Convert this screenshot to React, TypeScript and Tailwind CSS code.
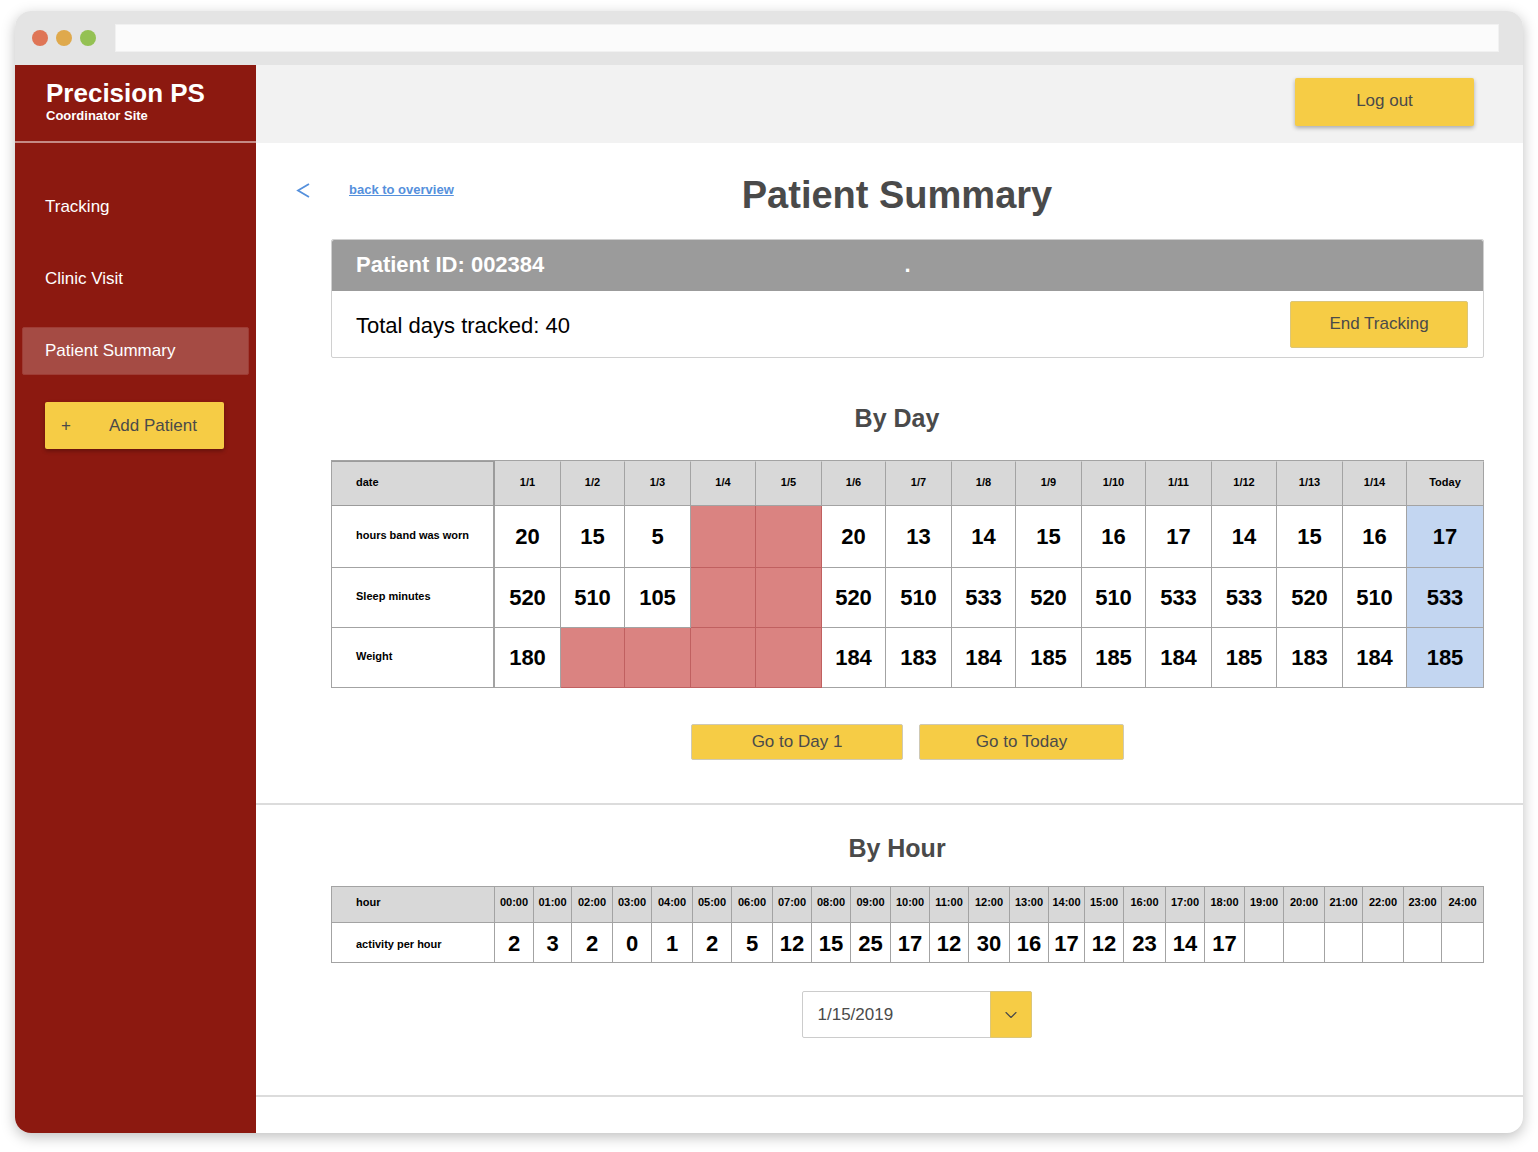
import { ChevronDown } from "lucide-react";

type CellValue = string | null;

const dayColumns = [
  { label: "1/1", width: "w-[66px]" },
  { label: "1/2", width: "w-[64px]" },
  { label: "1/3", width: "w-[66px]" },
  { label: "1/4", width: "w-[65px]" },
  { label: "1/5", width: "w-[66px]" },
  { label: "1/6", width: "w-[64px]" },
  { label: "1/7", width: "w-[66px]" },
  { label: "1/8", width: "w-[64px]" },
  { label: "1/9", width: "w-[66px]" },
  { label: "1/10", width: "w-[64px]" },
  { label: "1/11", width: "w-[66px]" },
  { label: "1/12", width: "w-[65px]" },
  { label: "1/13", width: "w-[66px]" },
  { label: "1/14", width: "w-[64px]" },
  { label: "Today", width: "w-[77px]" },
];

const dayRows: { label: string; height: string; values: CellValue[] }[] = [
  {
    label: "hours band was worn",
    height: "h-[62px]",
    values: ["20", "15", "5", null, null, "20", "13", "14", "15", "16", "17", "14", "15", "16", "17"],
  },
  {
    label: "Sleep minutes",
    height: "h-[60px]",
    values: ["520", "510", "105", null, null, "520", "510", "533", "520", "510", "533", "533", "520", "510", "533"],
  },
  {
    label: "Weight",
    height: "h-[60px]",
    values: ["180", null, null, null, null, "184", "183", "184", "185", "185", "184", "185", "183", "184", "185"],
  },
];

const activity = [
  "2", "3", "2", "0", "1", "2", "5", "12", "15", "25", "17", "12", "30", "16", "17", "12", "23", "14", "17",
  "", "", "", "", "", "",
];

const hourWidths = [
  "w-[39px]", "w-[38px]", "w-[41px]", "w-[39px]", "w-[41px]", "w-[39px]", "w-[41px]", "w-[39px]", "w-[39px]",
  "w-[40px]", "w-[39px]", "w-[39px]", "w-[41px]", "w-[39px]", "w-[36px]", "w-[39px]", "w-[42px]", "w-[39px]",
  "w-[40px]", "w-[39px]", "w-[41px]", "w-[38px]", "w-[41px]", "w-[38px]", "w-[42px]",
];

const navItems = ["Tracking", "Clinic Visit", "Patient Summary"];

function BrowserBar() {
  return (
    <div className="flex h-[54px] shrink-0 items-center bg-[#e4e4e4] pb-px pl-[17px] pr-6">
      <div className="flex gap-2">
        <span className="size-4 rounded-full bg-[#df7556]" />
        <span className="size-4 rounded-full bg-[#dfa94c]" />
        <span className="size-4 rounded-full bg-[#94c153]" />
      </div>
      <input
        type="text"
        aria-label="Address"
        className="ml-[19px] h-7 min-w-0 flex-1 border border-[#f1f1f1] bg-[#fbfbfb] px-2 text-sm outline-none"
      />
    </div>
  );
}

function Sidebar() {
  return (
    <aside className="flex w-[241px] shrink-0 flex-col bg-[#8c1910] text-white">
      <div className="h-[78px] border-b-2 border-[#c58a85] pl-[31px] pt-[14px]">
        <div className="text-[26px] font-bold leading-7">Precision PS</div>
        <div className="text-[13px] font-bold leading-[18px]">Coordinator Site</div>
      </div>
      <nav className="flex flex-col gap-6 px-[7px] pt-10">
        {navItems.map((item) => (
          <a
            key={item}
            href="#"
            aria-current={item === "Patient Summary" ? "page" : undefined}
            className={
              item === "Patient Summary"
                ? "flex h-12 items-center rounded-xs border border-[#9f3c35] bg-[#a54b44] pb-px pl-[22px] text-[17px]"
                : "flex h-12 items-center border border-transparent pb-px pl-[22px] text-[17px]"
            }
          >
            {item}
          </a>
        ))}
      </nav>
      <button
        type="button"
        className="ml-[30px] mt-[27px] flex h-[47px] w-[179px] items-center rounded-xs bg-[#f6cc45] pl-4 text-[17px] text-[#4a4a4a] shadow-[0_2px_4px_rgba(0,0,0,0.3)]"
      >
        <span className="w-12 text-left">+</span>
        <span>Add Patient</span>
      </button>
    </aside>
  );
}

function SectionTitle({ children }: { children: string }) {
  return (
    <h2 className="pl-10 pr-[25px] text-center text-[25px] font-bold leading-8 text-[#4a4a4a]">{children}</h2>
  );
}

function cellColour(value: CellValue, today: boolean) {
  if (value === null) return "border-[#c06060] bg-[#da8381]";
  if (today) return "border-[#a3a3a3] bg-[#c3d6f1]";
  return "border-[#a3a3a3] bg-white";
}

function DayTable() {
  return (
    <table className="w-full table-fixed border-separate border-spacing-0 border-l border-t border-[#a3a3a3] font-bold text-black">
      <colgroup>
        <col className="w-[163px]" />
        {dayColumns.map((c) => (
          <col key={c.label} className={c.width} />
        ))}
      </colgroup>
      <thead>
        <tr className="h-[45px] bg-[#d8d8d8] text-[11px]">
          <th scope="col" className="border-b border-r-2 border-t border-[#9b9b9b] pb-[3px] pl-6 text-left">
            date
          </th>
          {dayColumns.map((c) => (
            <th
              key={c.label}
              scope="col"
              className="border-b border-r border-t border-[#a3a3a3] border-t-[#d8d8d8] p-0 pb-[3px]"
            >
              {c.label}
            </th>
          ))}
        </tr>
      </thead>
      <tbody>
        {dayRows.map((row) => (
          <tr key={row.label} className={row.height}>
            <th scope="row" className="border-b border-r-2 border-[#a3a3a3] p-0 pb-[2px] pl-6 text-left text-[11px]">
              {row.label}
            </th>
            {row.values.map((value, i) => (
              <td
                key={dayColumns[i].label}
                className={`border-b border-r p-0 text-center text-[22px] leading-6 ${cellColour(value, i === dayColumns.length - 1)}`}
              >
                {value}
              </td>
            ))}
          </tr>
        ))}
      </tbody>
    </table>
  );
}

function HourTable() {
  return (
    <table className="w-full table-fixed border-separate border-spacing-0 border-l border-t border-[#a3a3a3] font-bold text-black">
      <colgroup>
        <col className="w-[163px]" />
        {hourWidths.map((width, i) => (
          <col key={i} className={width} />
        ))}
      </colgroup>
      <thead>
        <tr className="h-9 bg-[#d8d8d8] text-[11px]">
          <th scope="col" className="border-b border-r border-[#a3a3a3] pb-1 pl-6 text-left">
            hour
          </th>
          {hourWidths.map((_, i) => (
            <th key={i} scope="col" className="border-b border-r border-[#a3a3a3] p-0 pb-1">
              {String(i).padStart(2, "0")}:00
            </th>
          ))}
        </tr>
      </thead>
      <tbody>
        <tr className="h-10">
          <th scope="row" className="border-b border-r border-[#a3a3a3] p-0 pl-6 pt-[3px] text-left text-[11px]">
            activity per hour
          </th>
          {activity.map((value, i) => (
            <td key={i} className="border-b border-r border-[#a3a3a3] p-0 pt-[2px] text-center text-[22px] leading-6">
              {value}
            </td>
          ))}
        </tr>
      </tbody>
    </table>
  );
}

export default function App() {
  return (
    <div className="flex min-h-screen flex-col bg-white px-[15px] pb-[19px] pt-[11px] font-['Liberation_Sans',Arial,sans-serif]">
      <div className="flex flex-1 flex-col overflow-hidden rounded-2xl bg-white shadow-[0_4px_14px_rgba(0,0,0,0.25)]">
        <BrowserBar />
        <div className="flex flex-1">
          <Sidebar />
          <div className="flex min-w-0 flex-1 flex-col">
            <header className="flex h-[78px] items-start justify-end bg-[#f2f2f2] pr-[49px] pt-[13px]">
              <button
                type="button"
                className="h-12 w-[179px] rounded-xs bg-[#f6cc45] pb-[2px] text-[17px] text-[#4a4a4a] shadow-[0_2px_4px_rgba(0,0,0,0.3)]"
              >
                Log out
              </button>
            </header>

            <main className="flex flex-1 flex-col">
              <div className="grid grid-cols-[1fr_auto_1fr] items-center pl-10 pr-[25px] pt-7">
                <div className="flex items-center pb-[10px]">
                  <a href="#" aria-label="Back" className="w-[53px] text-[#5590dc]">
                    <svg width="14" height="16" viewBox="0 0 14 16" fill="none" stroke="currentColor" strokeWidth="1.8">
                      <path d="M13 2 2 8.5 13 15" />
                    </svg>
                  </a>
                  <a href="#" className="text-[13px] font-bold text-[#5590dc] underline">
                    back to overview
                  </a>
                </div>
                <h1 className="text-[38px] font-bold leading-[48px] text-[#4a4a4a]">Patient Summary</h1>
              </div>

              <section className="ml-[75px] mr-[39px] mt-5 rounded-xs border border-[#d0d0d0]">
                <div className="grid h-[51px] grid-cols-3 items-center rounded-t-xs bg-[#9b9b9b] px-6 pb-[2px] text-[22px] font-bold text-white">
                  <span>Patient ID: 002384</span>
                  <span className="text-center">.</span>
                </div>
                <div className="flex h-[66px] items-center justify-between pl-6 pr-[15px]">
                  <span className="pt-[2px] text-[22px] text-black">Total days tracked: 40</span>
                  <button
                    type="button"
                    className="h-[47px] w-[178px] rounded-xs border border-[#dcc678] bg-[#f6cc45] text-[17px] text-[#4a4a4a]"
                  >
                    End Tracking
                  </button>
                </div>
              </section>

              <section className="mt-11 border-b-2 border-[#dcdcdc] pb-[43px]">
                <SectionTitle>By Day</SectionTitle>
                <div className="ml-[75px] mr-[39px] mt-[26px]">
                  <DayTable />
                  <div className="mt-9 flex justify-center gap-4">
                    <button
                      type="button"
                      className="h-9 w-[212px] rounded-xs border border-[#cfc9b4] bg-[#f6cc45] text-[17px] leading-5 text-[#4a4a4a]"
                    >
                      Go to Day 1
                    </button>
                    <button
                      type="button"
                      className="h-9 w-[205px] rounded-xs border border-[#cfc9b4] bg-[#f6cc45] text-[17px] leading-5 text-[#4a4a4a]"
                    >
                      Go to Today
                    </button>
                  </div>
                </div>
              </section>

              <section className="border-b-2 border-[#dcdcdc] pb-[57px] pt-[27px]">
                <SectionTitle>By Hour</SectionTitle>
                <div className="ml-[75px] mr-[39px] mt-[22px]">
                  <HourTable />
                  <div className="mt-7 flex justify-center pl-[18px]">
                    <div className="relative h-[47px] w-[230px]">
                      <select
                        aria-label="Date"
                        defaultValue="1/15/2019"
                        className="size-full appearance-none rounded-xs border border-[#cccccc] bg-white pl-[15px] text-[17px] text-[#4a4a4a]"
                      >
                        <option>1/15/2019</option>
                      </select>
                      <span className="pointer-events-none absolute inset-y-0 right-0 flex w-[42px] items-center justify-center rounded-r-xs border border-[#dcc678] bg-[#f6cc45] text-[#4a4a4a]">
                        <ChevronDown size={20} strokeWidth={1.4} />
                      </span>
                    </div>
                  </div>
                </div>
              </section>
            </main>
          </div>
        </div>
      </div>
    </div>
  );
}
